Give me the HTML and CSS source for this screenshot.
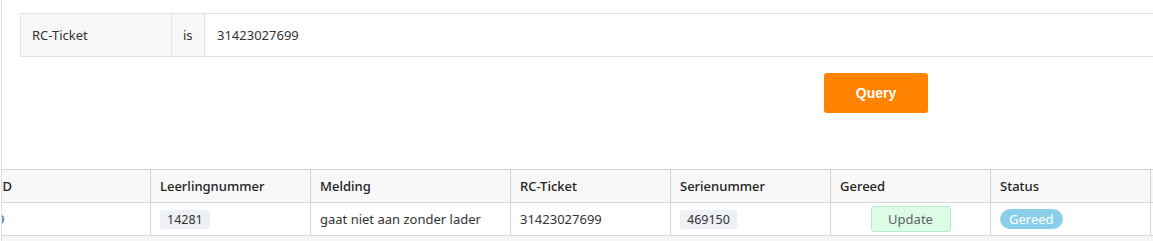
FILE: index.html
```html
<!DOCTYPE html>
<html>
<head>
<meta charset="utf-8">
<link rel="stylesheet" href="styles.css">
</head>
<body>
<div class="page">
  <div class="filters">
    <div class="filter-row">
      <div class="f-field">RC-Ticket</div>
      <div class="f-op">is</div>
      <div class="f-value">31423027699</div>
    </div>
    <div class="actions">
      <button class="query-btn">Query</button>
    </div>
  </div>
  <div class="table-wrap">
    <table class="grid">
      <colgroup>
        <col class="c"><col class="c"><col class="c wide"><col class="c">
        <col class="c"><col class="c"><col class="c"><col class="c">
      </colgroup>
      <thead>
        <tr>
          <th class="id-head">ID</th>
          <th>Leerlingnummer</th>
          <th>Melding</th>
          <th>RC-Ticket</th>
          <th>Serienummer</th>
          <th>Gereed</th>
          <th>Status</th>
          <th></th>
        </tr>
      </thead>
      <tbody>
        <tr>
          <td class="id-cell"><a class="id-link">9</a></td>
          <td><span class="tag">14281</span></td>
          <td>gaat niet aan zonder lader</td>
          <td>31423027699</td>
          <td><span class="tag">469150</span></td>
          <td class="center"><button class="update-btn">Update</button></td>
          <td><span class="pill">Gereed</span></td>
          <td></td>
        </tr>
      </tbody>
    </table>
  </div>
  <div class="footer-strip"></div>
</div>
</body>
</html>
```

FILE: styles.css
```css
* { box-sizing: border-box; }
html, body { margin: 0; padding: 0; background: #fff; }
body {
  font-family: "Noto Sans", "Open Sans", sans-serif;
  font-size: 13px;
  color: #333;
  overflow: hidden;
}
.page {
  margin-left: 1px;
  border-left: 1px solid #dedede;
  min-height: 241px;
}
.filters {
  padding: 13px 0 0 18px;
  height: 169px;
}
.filter-row {
  display: flex;
  height: 44px;
  border: 1px solid #e1e2e6;
  border-right: none;
  border-radius: 2px 0 0 2px;
}
.f-field, .f-op, .f-value {
  display: flex;
  align-items: center;
}
.f-field {
  width: 151px;
  padding-left: 11px;
  background: #f7f7f7;
  border-right: 1px solid #e1e2e6;
}
.f-op {
  width: 33px;
  padding-left: 11px;
  background: #f7f7f7;
  border-right: 1px solid #e1e2e6;
}
.f-value {
  flex: 1;
  padding-left: 12px;
  background: #fff;
}
.actions {
  display: flex;
  padding: 16px 0 0 804px;
}
.query-btn {
  width: 104px;
  height: 40px;
  border: none;
  border-radius: 3px;
  background: #ff8200;
  color: #fff;
  font-family: "Liberation Sans", Arial, sans-serif;
  font-weight: bold;
  font-size: 14px;
  padding: 0;
}
.table-wrap {
  overflow: hidden;
}
.grid {
  border-collapse: collapse;
  table-layout: fixed;
  margin-left: -12px;
  width: 1320px;
}
.grid col.c { width: 160px; }
.grid col.wide { width: 200px; }
.grid th, .grid td {
  border: 1px solid #d6d6d6;
  padding: 0 9px;
  text-align: left;
  white-space: nowrap;
  overflow: hidden;
}
.grid th {
  height: 33px;
  background: #f8f8f8;
  font-weight: 500;
  color: #222;
}
.grid th.id-head { padding-left: 7px; }
.grid td {
  height: 33px;
  color: #333;
}
.grid td.id-cell { padding-left: 6px; }
.id-link { color: #2266aa; }
.grid td.center { text-align: center; }
.tag {
  display: inline-block;
  background: #edf0f4;
  border-radius: 3px;
  padding: 0 7px;
  line-height: 19px;
  font-size: 12.5px;
}
.update-btn {
  width: 80px;
  height: 26px;
  background: #dcfce5;
  border: 1px solid #b8ecc6;
  border-radius: 3px;
  color: #5d6168;
  font-family: "Noto Sans", "Open Sans", sans-serif;
  font-size: 13px;
  padding: 0;
  vertical-align: middle;
}
.pill {
  display: inline-block;
  background: #89cfe9;
  color: #fff;
  border-radius: 10px;
  padding: 0 9px;
  line-height: 20px;
  font-size: 13px;
}
.footer-strip {
  height: 10px;
  background: #f6f6f6;
}
```
